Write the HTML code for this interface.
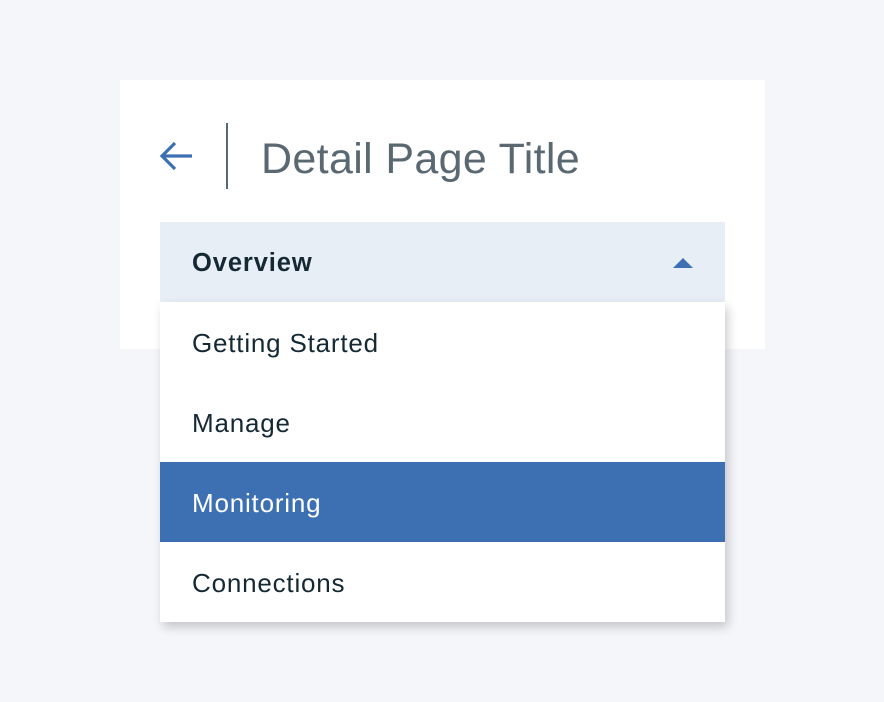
<!DOCTYPE html>
<html><head><style>
body{margin:0;width:884px;height:702px;background:#f4f6fa;font-family:"Liberation Sans",sans-serif;position:relative;overflow:hidden}
.card{position:absolute;left:120px;top:80px;width:645px;height:269px;background:#fff}
.title{position:absolute;left:261px;top:133px;font-size:43px;color:#5a6872;line-height:52px;letter-spacing:0.35px}
.div{position:absolute;left:226px;top:123px;width:2px;height:66px;background:#5a6872}
.hdr{position:absolute;left:160px;top:222px;width:565px;height:80px;background:#e8eef6}
.hdr span{position:absolute;left:32px;top:27px;font-size:25.5px;font-weight:bold;color:#152935;letter-spacing:0.9px}
.tri{position:absolute;left:513px;top:36px;width:0;height:0;border-left:10px solid transparent;border-right:10px solid transparent;border-bottom:10px solid #3d70b2}
.menu{position:absolute;left:160px;top:302px;width:565px;height:320px;background:#fff;box-shadow:3px 5px 10px rgba(0,0,0,.2)}
.it{height:80px;position:relative;font-size:26px;color:#152935;letter-spacing:0.8px}
.it span{position:absolute;left:32px;top:26px}
.sel{background:#3d70b2;color:#fff}
</style></head><body>
<div class="card"></div>
<svg style="position:absolute;left:158px;top:140px" width="36" height="32" viewBox="0 0 36 32"><path d="M17 3 L4 16 L17 29 M4 16 H34" fill="none" stroke="#3d70b2" stroke-width="3.2"/></svg>
<div class="div"></div>
<div class="title">Detail Page Title</div>
<div class="hdr"><span>Overview</span><div class="tri"></div></div>
<div class="menu">
<div class="it"><span>Getting Started</span></div>
<div class="it"><span>Manage</span></div>
<div class="it sel"><span>Monitoring</span></div>
<div class="it"><span>Connections</span></div>
</div>
</body></html>
